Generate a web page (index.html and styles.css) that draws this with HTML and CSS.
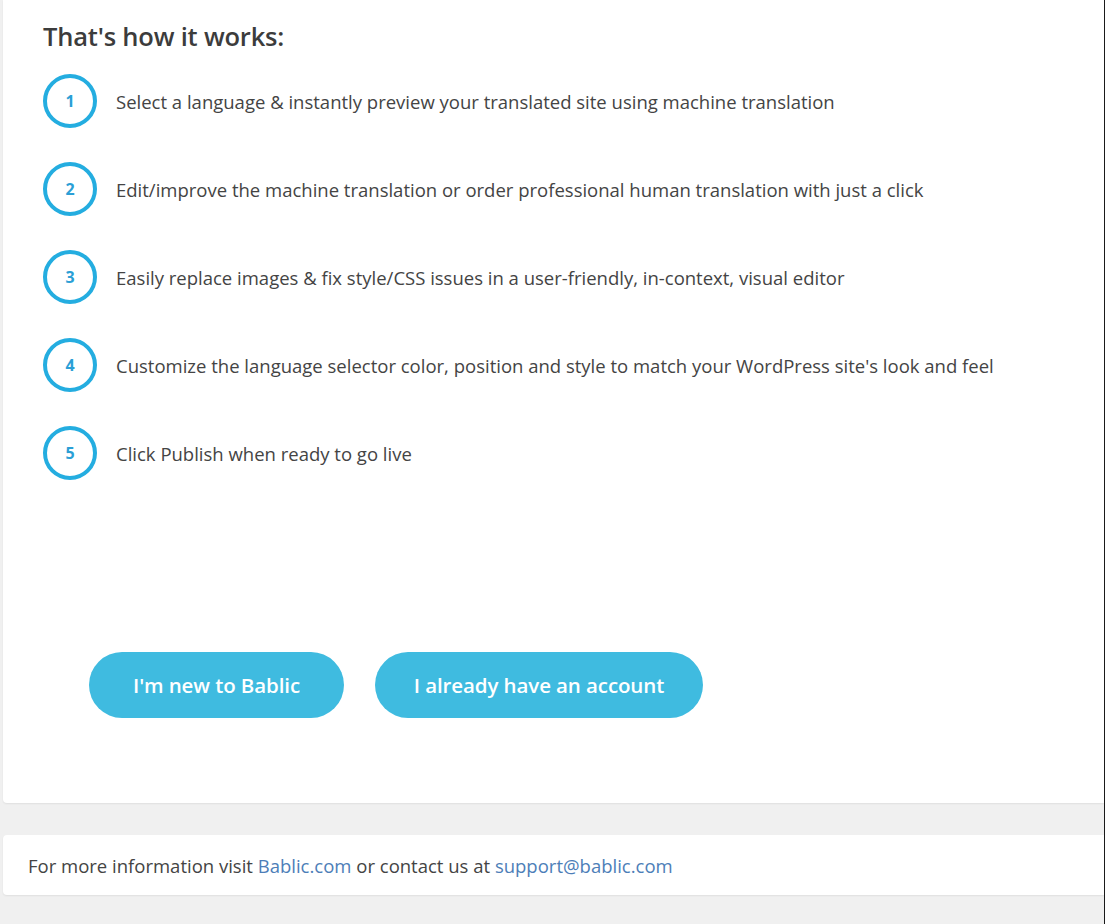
FILE: index.html
```html
<!DOCTYPE html>
<html>
<head>
<meta charset="utf-8">
<link rel="stylesheet" href="styles.css">
</head>
<body>
<div class="page">
  <div class="card main">
    <h2 class="title">That's how it works:</h2>
    <ol class="steps">
      <li class="step"><span class="num">1</span><span class="txt">Select a language &amp; instantly preview your translated site using machine translation</span></li>
      <li class="step"><span class="num">2</span><span class="txt">Edit/improve the machine translation or order professional human translation with just a click</span></li>
      <li class="step"><span class="num">3</span><span class="txt">Easily replace images &amp; fix style/CSS issues in a user-friendly, in-context, visual editor</span></li>
      <li class="step"><span class="num">4</span><span class="txt">Customize the language selector color, position and style to match your WordPress site's look and feel</span></li>
      <li class="step"><span class="num">5</span><span class="txt">Click Publish when ready to go live</span></li>
    </ol>
    <div class="actions">
      <a class="btn btn-new" href="#">I'm new to Bablic</a>
      <a class="btn btn-have" href="#">I already have an account</a>
    </div>
  </div>
  <div class="card footer">
    <span>For more information visit <a href="#">Bablic.com</a> or contact us at <a href="#">support@bablic.com</a></span>
  </div>
</div>
</body>
</html>
```
FILE: styles.css
```css
html, body {
  margin: 0;
  padding: 0;
  background: #f0f0f0;
}
body {
  font-family: "Open Sans", "Noto Sans", sans-serif;
  color: #444;
  border-right: 1px solid #1a1a1a;
  box-sizing: border-box;
  min-height: 924px;
}
.page {
  padding-left: 3px;
  display: flex;
  flex-direction: column;
  gap: 32px;
}
.card {
  background: #fff;
  border-radius: 0 0 0 4px;
  box-shadow: 0 1px 2px rgba(0,0,0,0.07);
}
.main {
  padding: 20px 0 0 40px;
  height: 803px;
  box-sizing: border-box;
}
.title {
  margin: 0 0 22px 0;
  font-size: 25.5px;
  font-weight: 600;
  color: #3c3c3c;
  line-height: 32px;
  letter-spacing: -0.2px;
}
.steps {
  list-style: none;
  margin: 0;
  padding: 0;
  display: flex;
  flex-direction: column;
  gap: 34px;
}
.step {
  display: flex;
  align-items: center;
  gap: 19px;
  height: 54px;
}
.num {
  width: 54px;
  height: 54px;
  box-sizing: border-box;
  border: 4px solid #24ade0;
  border-radius: 50%;
  display: flex;
  align-items: center;
  justify-content: center;
  color: #2b9fd6;
  font-size: 16px;
  font-weight: 700;
  flex: none;
}
.txt {
  font-size: 18.5px;
  color: #444;
}
.actions {
  display: flex;
  gap: 31px;
  margin-top: 172px;
  margin-left: 46px;
}
.btn {
  display: flex;
  align-items: center;
  justify-content: center;
  height: 66px;
  border-radius: 33px;
  background: #3fbbe0;
  color: #fff;
  font-weight: 600;
  font-size: 20.5px;
  text-decoration: none;
  letter-spacing: -0.1px;
}
.btn-new { width: 255px; }
.btn-have { width: 328px; }
.footer {
  border-radius: 4px 0 0 4px;
  height: 60px;
  display: flex;
  align-items: center;
  padding-left: 25px;
  font-size: 18.5px;
  color: #444;
}
.footer a {
  color: #4d7eb8;
  text-decoration: none;
}
```
